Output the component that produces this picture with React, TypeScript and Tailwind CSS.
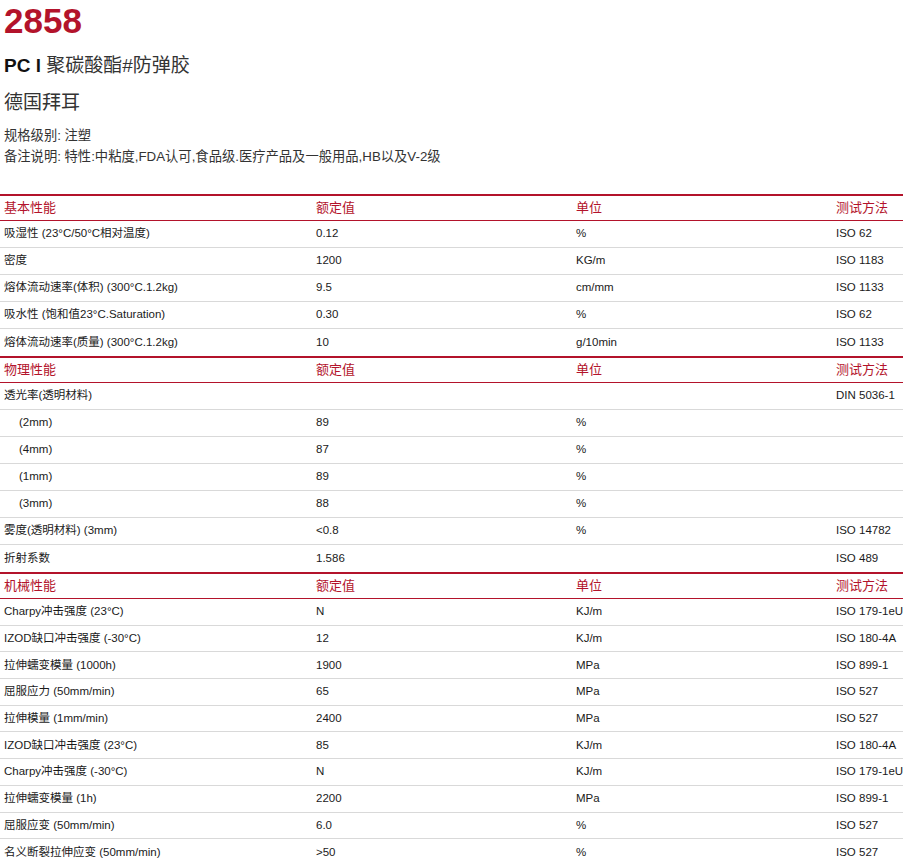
import React from 'react';

type Row = { name: string; value?: string; unit?: string; method?: string; indent?: boolean };
type Section = { title: string; rowHeight: string; rows: Row[] };

const sections: Section[] = [
  {
    title: '基本性能',
    rowHeight: 'h-[27px]',
    rows: [
      { name: '吸湿性 (23°C/50°C相对温度)', value: '0.12', unit: '%', method: 'ISO 62' },
      { name: '密度', value: '1200', unit: 'KG/m', method: 'ISO 1183' },
      { name: '熔体流动速率(体积) (300°C.1.2kg)', value: '9.5', unit: 'cm/mm', method: 'ISO 1133' },
      { name: '吸水性 (饱和值23°C.Saturation)', value: '0.30', unit: '%', method: 'ISO 62' },
      { name: '熔体流动速率(质量) (300°C.1.2kg)', value: '10', unit: 'g/10min', method: 'ISO 1133' },
    ],
  },
  {
    title: '物理性能',
    rowHeight: 'h-[27px]',
    rows: [
      { name: '透光率(透明材料)', method: 'DIN 5036-1' },
      { name: '(2mm)', value: '89', unit: '%', indent: true },
      { name: '(4mm)', value: '87', unit: '%', indent: true },
      { name: '(1mm)', value: '89', unit: '%', indent: true },
      { name: '(3mm)', value: '88', unit: '%', indent: true },
      { name: '雾度(透明材料) (3mm)', value: '<0.8', unit: '%', method: 'ISO 14782' },
      { name: '折射系数', value: '1.586', method: 'ISO 489' },
    ],
  },
  {
    title: '机械性能',
    rowHeight: 'h-[26.7px]',
    rows: [
      { name: 'Charpy冲击强度 (23°C)', value: 'N', unit: 'KJ/m', method: 'ISO 179-1eU' },
      { name: 'IZOD缺口冲击强度 (-30°C)', value: '12', unit: 'KJ/m', method: 'ISO 180-4A' },
      { name: '拉伸蠕变模量 (1000h)', value: '1900', unit: 'MPa', method: 'ISO 899-1' },
      { name: '屈服应力 (50mm/min)', value: '65', unit: 'MPa', method: 'ISO 527' },
      { name: '拉伸模量 (1mm/min)', value: '2400', unit: 'MPa', method: 'ISO 527' },
      { name: 'IZOD缺口冲击强度 (23°C)', value: '85', unit: 'KJ/m', method: 'ISO 180-4A' },
      { name: 'Charpy冲击强度 (-30°C)', value: 'N', unit: 'KJ/m', method: 'ISO 179-1eU' },
      { name: '拉伸蠕变模量 (1h)', value: '2200', unit: 'MPa', method: 'ISO 899-1' },
      { name: '屈服应变 (50mm/min)', value: '6.0', unit: '%', method: 'ISO 527' },
      { name: '名义断裂拉伸应变 (50mm/min)', value: '>50', unit: '%', method: 'ISO 527' },
    ],
  },
];

const font = { fontFamily: '"Liberation Sans", Arial, "Noto Sans CJK SC", sans-serif' };
const grid = 'grid grid-cols-[316px_260px_260px_1fr] items-center whitespace-nowrap';

export default function App() {
  return (
    <div className="w-[903px] bg-white text-[#1a1a1a]" style={font}>
      <div className="px-1">
        <h1 className="pt-[3px] text-[35px] leading-[36px] font-bold text-[#b3132b]">2858</h1>
        <div className="mt-[16px] text-[19px] leading-[22px] text-[#333]">
          <span className="font-bold text-[#111]">PC l</span> 聚碳酸酯#防弹胶
        </div>
        <div className="mt-[15px] text-[19px] leading-[22px] text-[#333]">德国拜耳</div>
        <div className="mt-[11px] text-[13.3px] leading-[21px] text-[#333]">
          <div>规格级别: 注塑</div>
          <div>备注说明: 特性:中粘度,FDA认可,食品级.医疗产品及一般用品,HB以及V-2级</div>
        </div>
      </div>

      <div className="mt-[27px]">
        {sections.map((s) => (
          <div key={s.title}>
            <div className={`${grid} h-[27px] border-t-2 border-b border-[#b3132b] text-[13px] text-[#b3132b]`}>
              <div className="pl-1">{s.title}</div>
              <div>额定值</div>
              <div>单位</div>
              <div>测试方法</div>
            </div>
            {s.rows.map((r, i) => (
              <div
                key={i}
                className={`${grid} ${s.rowHeight} text-[11.5px] ${i < s.rows.length - 1 ? 'border-b border-[#d9d9d9]' : ''}`}
              >
                <div className={r.indent ? 'pl-[19px]' : 'pl-1'}>{r.name}</div>
                <div>{r.value}</div>
                <div>{r.unit}</div>
                <div>{r.method}</div>
              </div>
            ))}
          </div>
        ))}
      </div>
    </div>
  );
}
